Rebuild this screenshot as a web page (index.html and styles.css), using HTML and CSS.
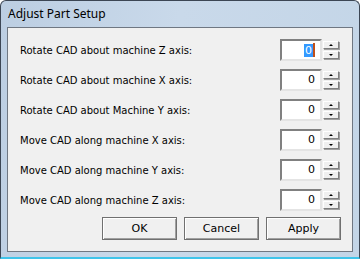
FILE: index.html
```html
<!DOCTYPE html>
<html lang="en">
<head>
    <meta charset="UTF-8">
    <title>Adjust Part Setup</title>
    <link rel="stylesheet" href="styles.css">
</head>
<body>
    <div class="window">
        <!-- Title bar -->
        <div class="titlebar">Adjust Part Setup</div>

        <!-- Dialog body -->
        <div class="client">
            <div class="row">
                <span class="label">Rotate CAD about machine Z axis:</span>
                <div class="spin">
                    <div class="field"><span class="selected">0</span><span class="caret"></span></div>
                    <div class="arrows">
                        <div class="arrow"><span class="up"></span></div>
                        <div class="arrow"><span class="down"></span></div>
                    </div>
                </div>
            </div>
            <div class="row">
                <span class="label">Rotate CAD about machine X axis:</span>
                <div class="spin">
                    <div class="field">0</div>
                    <div class="arrows">
                        <div class="arrow"><span class="up"></span></div>
                        <div class="arrow"><span class="down"></span></div>
                    </div>
                </div>
            </div>
            <div class="row">
                <span class="label">Rotate CAD about Machine Y axis:</span>
                <div class="spin">
                    <div class="field">0</div>
                    <div class="arrows">
                        <div class="arrow"><span class="up"></span></div>
                        <div class="arrow"><span class="down"></span></div>
                    </div>
                </div>
            </div>
            <div class="row">
                <span class="label">Move CAD along machine X axis:</span>
                <div class="spin">
                    <div class="field">0</div>
                    <div class="arrows">
                        <div class="arrow"><span class="up"></span></div>
                        <div class="arrow"><span class="down"></span></div>
                    </div>
                </div>
            </div>
            <div class="row">
                <span class="label">Move CAD along machine Y axis:</span>
                <div class="spin">
                    <div class="field">0</div>
                    <div class="arrows">
                        <div class="arrow"><span class="up"></span></div>
                        <div class="arrow"><span class="down"></span></div>
                    </div>
                </div>
            </div>
            <div class="row">
                <span class="label">Move CAD along machine Z axis:</span>
                <div class="spin">
                    <div class="field">0</div>
                    <div class="arrows">
                        <div class="arrow"><span class="up"></span></div>
                        <div class="arrow"><span class="down"></span></div>
                    </div>
                </div>
            </div>

            <div class="buttons">
                <button class="btn">OK</button>
                <button class="btn">Cancel</button>
                <button class="btn">Apply</button>
            </div>
        </div>
    </div>
</body>
</html>
```

FILE: styles.css
```css
/* Global */
body {
    margin: 0;
    padding: 0;
    background-color: #ffffff;
    font-family: Tahoma, "DejaVu Sans", sans-serif;
}

/* Window frame */
.window {
    width: 360px;
    height: 259px;
    box-sizing: border-box;
    border: 1px solid #3c4654;
    border-radius: 6px 6px 0 0;
    background: linear-gradient(100deg, #bccee2 0%, #c9d9ea 45%, #c3d5e7 100%);
    border-bottom: 2px solid #3fc4ea;
    display: flex;
    flex-direction: column;
}

.titlebar {
    height: 26px;
    padding-left: 7px;
    line-height: 26px;
    font-family: "Noto Sans", sans-serif;
    font-size: 12px;
    color: #000;
}

/* Client area */
.client {
    margin: 0 6px;
    height: 225px;
    box-sizing: border-box;
    background-color: #f0f0f0;
    border: 1px solid #6f7782;
    padding: 11px 13px 0 12px;
    display: flex;
    flex-direction: column;
    gap: 8px;
}

.row {
    display: flex;
    align-items: center;
    justify-content: space-between;
    height: 22px;
}

.label {
    font-family: "DejaVu Sans", sans-serif;
    font-size: 10px;
    color: #000;
}

/* Spin control */
.spin {
    display: flex;
    gap: 1px;
    height: 22px;
}

.field {
    width: 42px;
    box-sizing: border-box;
    background-color: #fff;
    border: 2px solid;
    border-color: #808080 #e4e4e4 #e4e4e4 #808080;
    font-family: "DejaVu Sans", sans-serif;
    font-size: 11px;
    text-align: right;
    line-height: 18px;
    padding-right: 5px;
    display: flex;
    justify-content: flex-end;
    align-items: center;
}

.selected {
    background-color: #3399ff;
    color: #fff;
    line-height: 13px;
    padding: 0 1px;
}

.caret {
    width: 2px;
    height: 14px;
    background-color: #c0501a;
}

.arrows {
    display: flex;
    flex-direction: column;
    gap: 2px;
    padding: 2px 0;
}

.arrow {
    width: 16px;
    height: 9px;
    box-sizing: border-box;
    background-color: #f0f0f0;
    border: 1px solid;
    border-color: #fff #808080 #808080 #fff;
    box-shadow: 1px 1px 0 #a0a0a0;
    display: flex;
    align-items: center;
    justify-content: center;
}

.up {
    border-left: 2px solid transparent;
    border-right: 2px solid transparent;
    border-bottom: 2px solid #000;
}

.down {
    border-left: 2px solid transparent;
    border-right: 2px solid transparent;
    border-top: 2px solid #000;
}

/* Buttons */
.buttons {
    display: flex;
    justify-content: flex-end;
    gap: 7px;
    margin-top: -2px;
    margin-right: -2px;
}

.btn {
    width: 75px;
    height: 23px;
    background-color: #f0f0f0;
    border: 1px solid #707070;
    box-shadow: inset 1px 1px 0 #fff, inset -1px -1px 0 #a0a0a0;
    font-family: "DejaVu Sans", sans-serif;
    font-size: 11px;
    color: #000;
    padding: 0;
}
```
